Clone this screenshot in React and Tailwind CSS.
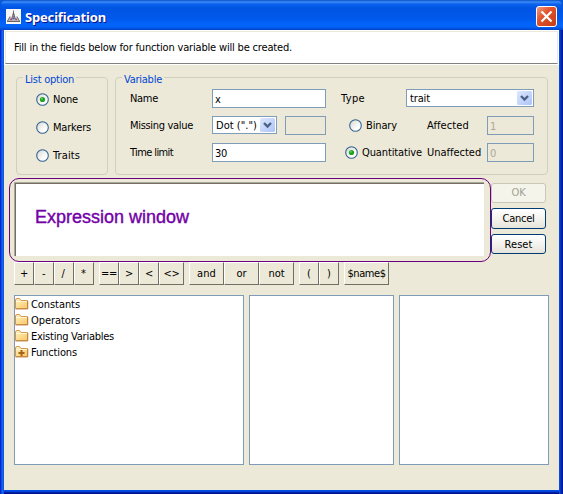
import React, { useLayoutEffect, useRef, useState } from 'react';

// Single-line label whose tracking is adjusted so that it fills `w` pixels.
function T({ w, className = '', children }) {
  const ref = useRef(null);
  const [spacing, setSpacing] = useState(0);
  useLayoutEffect(() => {
    const el = ref.current;
    el.style.letterSpacing = '0px';
    const natural = el.getBoundingClientRect().width;
    setSpacing((w - natural) / el.textContent.length);
  }, [w]);
  return (
    <span ref={ref} className={`inline-block whitespace-pre ${className}`} style={{ letterSpacing: `${spacing}px` }}>
      {children}
    </span>
  );
}

function Radio({ checked }) {
  return (
    <svg width="13" height="13" viewBox="0 0 13 13" className="block shrink-0">
      <defs>
        <linearGradient id="radioFill" x1="0" y1="0" x2="1" y2="1">
          <stop offset="0" stopColor="#d6d6d0" />
          <stop offset="0.7" stopColor="#ffffff" />
        </linearGradient>
      </defs>
      <circle cx="6.5" cy="6.5" r="5.8" fill="url(#radioFill)" stroke="#336391" strokeWidth="1.1" />
      {checked && <circle cx="6.5" cy="6.5" r="2.6" fill="#21a121" />}
      {checked && <circle cx="5.9" cy="5.8" r="1" fill="#55d551" />}
    </svg>
  );
}

function RadioRow({ checked, label, w, className = '' }) {
  return (
    <div className={`flex h-[14px] items-start gap-[4px] ${className}`}>
      <Radio checked={checked} />
      <T w={w}>{label}</T>
    </div>
  );
}

function Group({ title, w, className = '', children }) {
  return (
    <fieldset className={`relative h-[98px] rounded-[4px] border border-[#d0d0bf] ${className}`}>
      <div className="absolute -top-[5px] left-[6px] h-[14px] bg-[#ece9d8] px-[2px] leading-[14px] text-[#0046d5]">
        <T w={w}>{title}</T>
      </div>
      {children}
    </fieldset>
  );
}

function Field({ disabled, className = '', children, w = 6 }) {
  return (
    <div
      className={`h-[19px] border border-[#7f9db9] pl-[2px] pt-[2px] leading-[15px] ${disabled ? 'bg-[#ece9d8] text-[#aca899]' : 'bg-white'} ${className}`}
    >
      {children && <T w={w}>{children}</T>}
    </div>
  );
}

function Combo({ className = '', children, w }) {
  return (
    <div className={`flex h-[18px] justify-between border border-[#7f9db9] bg-white p-px pl-[3px] leading-[14px] ${className}`}>
      <T w={w} className="pt-px">{children}</T>
      <svg width="15" height="14" viewBox="0 0 15 14" className="block shrink-0">
        <defs>
          <linearGradient id="arrowFill" x1="0" y1="0" x2="1" y2="1">
            <stop offset="0" stopColor="#dce6ff" />
            <stop offset="1" stopColor="#aec4f6" />
          </linearGradient>
        </defs>
        <rect width="15" height="14" rx="1.5" fill="url(#arrowFill)" />
        <path d="M4 5 L7.5 8.5 L11 5" fill="none" stroke="#4d6185" strokeWidth="2.4" />
      </svg>
    </div>
  );
}

function PushButton({ disabled, className = '', w, children }) {
  return (
    <div
      className={`flex w-[55px] items-center justify-center rounded-[3px] border ${
        disabled ? 'border-[#c9c7ba] bg-[#f5f4ea] text-[#a1a192]' : 'border-[#003c74] bg-linear-to-b from-white via-[#f4f3ee] to-[#e6e3da]'
      } ${className}`}
    >
      <T w={w}>{children}</T>
    </div>
  );
}

function Key({ className = 'w-[20px]', w, children }) {
  return (
    <div
      className={`flex h-[23px] items-center justify-center border border-b-[#716f64] border-l-white border-r-[#716f64] border-t-white ${className}`}
    >
      <T w={w}>{children}</T>
    </div>
  );
}

function TreeItem({ plus, w, children }) {
  return (
    <div className="flex h-[16px] items-center gap-[2px]">
      <svg width="14" height="12" viewBox="0 0 14 12" className="block shrink-0">
        <defs>
          <linearGradient id="folderFill" x1="0" y1="0" x2="1" y2="1">
            <stop offset="0" stopColor="#fff3c4" />
            <stop offset="1" stopColor="#fbc664" />
          </linearGradient>
        </defs>
        <path d="M.5 10.5V2Q.5.5 2 .5H4.5L6 2.5H12.5V10.5Z" fill="url(#folderFill)" stroke="#d19a50" />
        <path d="M1 3.5H12" stroke="#fff6d8" />
        <path d="M.5 11H12.8V3" fill="none" stroke="#b87a35" strokeWidth=".8" />
        {plus && <path d="M6.5 4V10M3.5 7H9.5" stroke="#a86412" strokeWidth="2" />}
      </svg>
      <T w={w} className="pt-[2px]">{children}</T>
    </div>
  );
}

function LogoIcon() {
  return (
    <svg width="15" height="15" viewBox="0 0 15 15" className="mt-[2px] block">
      <rect width="15" height="15" fill="#f7f7f7" />
      <path d="M1 12.5 L4 7.5 L5.5 9 L7.5 2 L9.5 9 L11 7.5 L14 12.5 Z" fill="#b9b9c1" />
      <path d="M7.5 1.5V6M7.5 4L5.5 10.5M7.5 4L9.5 10.5M4 7.5L1.5 12M11 7.5L13.5 12" stroke="#55535c" strokeWidth=".8" />
      <path d="M1 12.5H14" stroke="#666" />
      <path d="M4 10.5H6M9.5 10.5H11M7 7.5H8" stroke="#c04a4a" strokeWidth="1.4" />
      <path d="M6.5 9.5H8.5" stroke="#3c55bb" strokeWidth="1.4" />
    </svg>
  );
}

export default function App() {
  return (
    <div className="h-[494px] w-[563px] overflow-hidden bg-[#0a5ad8] [font-family:'DejaVu_Sans_Condensed','DejaVu_Sans',sans-serif] text-[11px] leading-[14px] text-black [font-stretch:condensed]">
      <div className="flex h-full flex-col overflow-hidden rounded-t-[7px] bg-[linear-gradient(to_right,#0019cf_0,#0831d9_1px,#166aee_2px,#0855dd_4px,#0855dd_559px,#0441d8_560px,#0029b8_561px,#00138c_563px)]">
        <header className="flex h-[30px] shrink-0 items-center bg-[linear-gradient(to_bottom,#0a50c8_0,#3c8cf8_2px,#0c62ee_4px,#0054e3_8px,#0058ea_18px,#0265fc_25px,#0262f5_27px,#0043c8_30px)] pl-[6px] pr-[6px]">
          <LogoIcon />
          <div className="ml-[4px] mt-[4px] [font-family:'Noto_Sans',sans-serif] text-[13px] font-bold leading-[18px] text-white [text-shadow:1px_1px_0_#0f1089]">
            <T w={81}>Specification</T>
          </div>
          <svg width="21" height="21" viewBox="0 0 21 21" className="ml-auto mt-[3px] block">
            <defs>
              <linearGradient id="closeFill" x1="0" y1="0" x2="1" y2="1">
                <stop offset="0" stopColor="#f0a088" />
                <stop offset="0.4" stopColor="#e2532c" />
                <stop offset="1" stopColor="#c43c10" />
              </linearGradient>
            </defs>
            <rect x=".5" y=".5" width="20" height="20" rx="2.5" fill="url(#closeFill)" stroke="#fff" />
            <path d="M5.5 5.5L15.5 15.5M15.5 5.5L5.5 15.5" stroke="#fff" strokeWidth="2.2" />
          </svg>
        </header>

        <main className="mx-[4px] mb-[4px] flex flex-1 flex-col bg-[#ece9d8] shadow-[0_1px_0_#0050e6,0_2px_0_#0040d8,0_3px_0_#0020a8,0_4px_0_#00138c]">
          <div className="h-[35px] bg-white p-px">
            <div className="h-[33px] border border-b-[#808080] border-l-[#ece9d8] border-r-[#ece9d8] border-t-[#ece9d8] pl-[8px] pt-[9px] leading-[14px]">
              <T w={278}>Fill in the fields below for function variable will be created.</T>
            </div>
          </div>

          <div className="mt-[12px] flex gap-[7px] pl-[12px]">
            <Group title="List option" w={49} className="w-[92px]">
              <div className="flex flex-col gap-[14px] pl-[19px] pt-[15px]">
                <RadioRow checked label="None" w={25} />
                <RadioRow label="Markers" w={38} />
                <RadioRow label="Traits" w={27} />
              </div>
            </Group>
            <Group title="Variable" w={38} className="w-[433px]">
              <div className="flex flex-col gap-[8px] pl-[14px] pt-[11px]">
                <div className="flex h-[19px]">
                  <div className="w-[82px] pt-[3px]"><T w={28}>Name</T></div>
                  <Field className="w-[114px]">x</Field>
                  <div className="w-[80px] pl-[15px] pt-[3px]"><T w={24}>Type</T></div>
                  <Combo className="w-[128px]" w={20}>trait</Combo>
                </div>
                <div className="flex h-[19px]">
                  <div className="w-[82px] pt-[3px]"><T w={63}>Missing value</T></div>
                  <Combo className="w-[65px]" w={41}>Dot (".")</Combo>
                  <Field disabled className="ml-[8px] w-[41px]" />
                  <RadioRow label="Binary" w={31} className="ml-[23px] mt-[3px] w-[78px]" />
                  <div className="w-[60px] pt-[3px]"><T w={42}>Affected</T></div>
                  <Field disabled className="w-[47px]">1</Field>
                </div>
                <div className="flex h-[19px]">
                  <div className="w-[82px] pt-[3px]"><T w={43}>Time limit</T></div>
                  <Field className="w-[114px]" w={12}>30</Field>
                  <RadioRow checked label="Quantitative" w={60} className="ml-[19px] mt-[3px] w-[82px]" />
                  <div className="w-[60px] pt-[3px]"><T w={54}>Unaffected</T></div>
                  <Field disabled className="w-[47px]">0</Field>
                </div>
              </div>
            </Group>
          </div>

          <div className="mt-[3px] flex h-[84px] pl-[5px]">
            <div className="h-[84px] w-[482px] rounded-[10px] border border-[#6a007f] p-[3px] pl-[4px]">
              <div className="h-[74px] w-[470px] border-l border-t border-[#aca899] bg-white">
                <div className="h-full border-l border-t border-[#716f64] pl-[19px] pt-[22px] [font-family:'Liberation_Sans',Arial,sans-serif] text-[18px] leading-[22px] text-[#7300a8] [-webkit-text-stroke:0.4px_#7300a8]">
                  <T w={154}>Expression window</T>
                </div>
              </div>
            </div>
            <div className="flex flex-col pt-[5px]">
              <PushButton disabled w={14} className="h-[20px]">OK</PushButton>
              <PushButton w={32} className="mt-[5px] h-[21px]">Cancel</PushButton>
              <PushButton w={28} className="mt-[5px] h-[20px] pt-px">Reset</PushButton>
            </div>
          </div>

          <div className="flex gap-[5px] pl-[10px]">
            <div className="flex">
              <Key w={8}>+</Key>
              <Key w={4}>-</Key>
              <Key w={5}>/</Key>
              <Key w={6}>*</Key>
            </div>
            <div className="flex">
              <Key w={16}>==</Key>
              <Key w={8}>&gt;</Key>
              <Key w={8}>&lt;</Key>
              <Key w={16} className="w-[25px]">&lt;&gt;</Key>
            </div>
            <div className="flex">
              <Key w={19} className="w-[35px]">and</Key>
              <Key w={10} className="w-[35px]">or</Key>
              <Key w={16} className="w-[35px]">not</Key>
            </div>
            <div className="flex">
              <Key w={4}>(</Key>
              <Key w={4}>)</Key>
            </div>
            <Key w={38} className="w-[45px]">$name$</Key>
          </div>

          <div className="mt-[10px] flex h-[170px] gap-[5px] pl-[10px]">
            <div className="w-[230px] border border-[#7f9db9] bg-white">
              <TreeItem w={49}>Constants</TreeItem>
              <TreeItem w={49}>Operators</TreeItem>
              <TreeItem w={83}>Existing Variables</TreeItem>
              <TreeItem plus w={46}>Functions</TreeItem>
            </div>
            <div className="w-[145px] border border-[#7f9db9] bg-white" />
            <div className="w-[150px] border border-[#7f9db9] bg-white" />
          </div>
        </main>
      </div>
    </div>
  );
}
